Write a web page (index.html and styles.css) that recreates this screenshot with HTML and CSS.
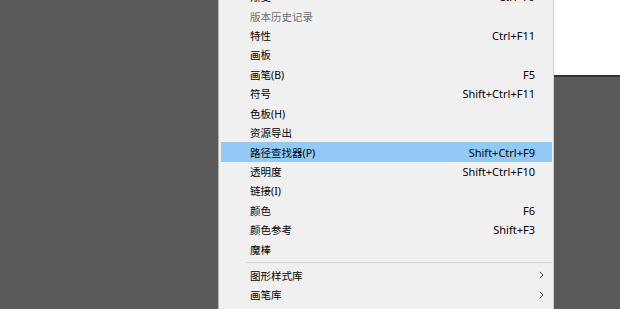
FILE: index.html
```html
<!DOCTYPE html>
<html lang="zh-CN">
<head>
    <meta charset="UTF-8">
    <title>窗口菜单</title>
    <link rel="stylesheet" href="styles.css">
</head>
<body>
    <div class="workspace">
        <div class="artboard"></div>
    </div>

    <ul class="menu">
        <li class="item"><span class="label">渐变</span><span class="key">Ctrl+F9</span><span class="sub"></span></li>
        <li class="item disabled"><span class="label">版本历史记录</span><span class="key"></span><span class="sub"></span></li>
        <li class="item"><span class="label">特性</span><span class="key">Ctrl+F11</span><span class="sub"></span></li>
        <li class="item"><span class="label">画板</span><span class="key"></span><span class="sub"></span></li>
        <li class="item"><span class="label">画笔(B)</span><span class="key">F5</span><span class="sub"></span></li>
        <li class="item"><span class="label">符号</span><span class="key">Shift+Ctrl+F11</span><span class="sub"></span></li>
        <li class="item"><span class="label">色板(H)</span><span class="key"></span><span class="sub"></span></li>
        <li class="item"><span class="label">资源导出</span><span class="key"></span><span class="sub"></span></li>
        <li class="item active"><span class="label">路径查找器(P)</span><span class="key">Shift+Ctrl+F9</span><span class="sub"></span></li>
        <li class="item"><span class="label">透明度</span><span class="key">Shift+Ctrl+F10</span><span class="sub"></span></li>
        <li class="item"><span class="label">链接(I)</span><span class="key"></span><span class="sub"></span></li>
        <li class="item"><span class="label">颜色</span><span class="key">F6</span><span class="sub"></span></li>
        <li class="item"><span class="label">颜色参考</span><span class="key">Shift+F3</span><span class="sub"></span></li>
        <li class="item"><span class="label">魔棒</span><span class="key"></span><span class="sub"></span></li>
        <li class="separator"></li>
        <li class="item"><span class="label">图形样式库</span><span class="key"></span>
            <span class="sub"><svg width="5" height="8" viewBox="0 0 5 8"><polyline points="0.8,0.8 4,4 0.8,7.2" fill="none" stroke="#444" stroke-width="1"/></svg></span></li>
        <li class="item"><span class="label">画笔库</span><span class="key"></span>
            <span class="sub"><svg width="5" height="8" viewBox="0 0 5 8"><polyline points="0.8,0.8 4,4 0.8,7.2" fill="none" stroke="#444" stroke-width="1"/></svg></span></li>
    </ul>
</body>
</html>
```

FILE: styles.css
```css
body {
    margin: 0;
    width: 620px;
    height: 309px;
    overflow: hidden;
    position: relative;
    background: #5a5a5a;
    font-family: "Noto Sans", "Noto Sans CJK SC", sans-serif;
}
.workspace {
    height: 309px;
    display: flex;
    justify-content: flex-end;
    align-items: flex-start;
}
.artboard {
    width: 66px;
    height: 75px;
    background: #ffffff;
    border-bottom: 2px solid #333333;
}
.menu {
    position: absolute;
    left: 218px;
    top: -16px;
    width: 336px;
    box-sizing: border-box;
    margin: 0;
    padding: 2px 1px 10px 2px;
    list-style: none;
    background: #f0f0f0;
    border: 1px solid #b4b4b4;
    border-right-color: #d0d0d0;
}
.item {
    height: 19.43px;
    display: grid;
    grid-template-columns: 1fr auto 17px;
    align-items: center;
    padding-left: 29px;
    color: #000000;
}
.label {
    font-size: 10.5px;
    white-space: nowrap;
}
.key {
    font-size: 11px;
    white-space: nowrap;
}
.sub {
    display: flex;
    align-items: center;
    padding-left: 4px;
}
.disabled {
    color: #6e6e6e;
}
.active {
    background: #91c9f7;
}
.separator {
    height: 1px;
    margin: 3px 0 2.7px 25px;
    background: #d7d7d7;
}
```
